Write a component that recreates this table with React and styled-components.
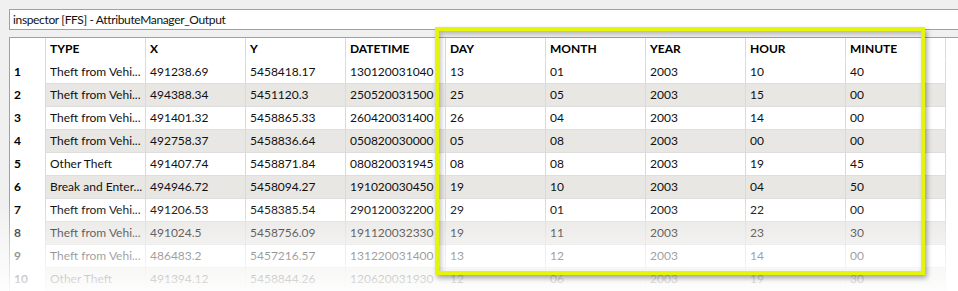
import React from 'react'
import styled, { createGlobalStyle } from 'styled-components'

const GlobalStyle = createGlobalStyle`
  html, body {
    margin: 0;
    padding: 0;
    background: #f0f0f0;
    overflow: hidden;
  }
  body {
    font-family: "Segoe UI", Lato, "Noto Sans", sans-serif;
    font-size: 12px;
    color: #111;
  }
`

const COLUMNS = ['TYPE', 'X', 'Y', 'DATETIME', 'DAY', 'MONTH', 'YEAR', 'HOUR', 'MINUTE']

const ROWS = [
  ['Theft from Vehi...', '491238.69', '5458418.17', '130120031040', '13', '01', '2003', '10', '40'],
  ['Theft from Vehi...', '494388.34', '5451120.3', '250520031500', '25', '05', '2003', '15', '00'],
  ['Theft from Vehi...', '491401.32', '5458865.33', '260420031400', '26', '04', '2003', '14', '00'],
  ['Theft from Vehi...', '492758.37', '5458836.64', '050820030000', '05', '08', '2003', '00', '00'],
  ['Other Theft', '491407.74', '5458871.84', '080820031945', '08', '08', '2003', '19', '45'],
  ['Break and Enter...', '494946.72', '5458094.27', '191020030450', '19', '10', '2003', '04', '50'],
  ['Theft from Vehi...', '491206.53', '5458385.54', '290120032200', '29', '01', '2003', '22', '00'],
  ['Theft from Vehi...', '491024.5', '5458756.09', '191120032330', '19', '11', '2003', '23', '30'],
  ['Theft from Vehi...', '486483.2', '5457216.57', '131220031400', '13', '12', '2003', '14', '00'],
  ['Other Theft', '491394.12', '5458844.26', '120620031930', '12', '06', '2003', '19', '30'],
]

const Page = styled.div`
  position: relative;
  height: 291px;
  padding: 9px 0 0 9px;
  display: flex;
  flex-direction: column;
  gap: 7px;
  box-sizing: border-box;
  overflow: hidden;
`

const TitleBar = styled.div`
  height: 19px;
  line-height: 19px;
  background: #fff;
  border: 1px solid #a0a0a0;
  border-right: none;
  padding-left: 3px;
  white-space: nowrap;
  letter-spacing: -0.35px;
`

const TableArea = styled.div`
  position: relative;
  flex: 1;
  background: #fff;
  border-top: 1px solid #a0a0a0;
  border-left: 1px solid #a0a0a0;
`

const Row = styled.div`
  display: grid;
  grid-template-columns: 36px repeat(9, 100px) 1fr;
  height: 23px;
`

const RowHead = styled.div`
  background: #fff;
  border-right: 1px solid #d9d9d9;
  padding-left: 4px;
  font-weight: 700;
  color: #000;
  line-height: 22px;
`

const Cell = styled.div`
  background: ${p => (p.$stripe ? '#e8e7e4' : '#fff')};
  border-right: 1px solid #dadada;
  border-bottom: 1px solid ${p => (p.$header ? '#fff' : '#dedede')};
  padding-left: 4px;
  line-height: 22px;
  white-space: nowrap;
  overflow: hidden;
  font-weight: ${p => (p.$header ? 700 : 400)};
  color: ${p => (p.$header ? '#000' : '#111')};
`

const Filler = styled.div`
  background: #fff;
`

const Highlight = styled.div`
  position: absolute;
  left: 435px;
  top: 27px;
  width: 490px;
  height: 248px;
  box-sizing: border-box;
  border: 4px solid #e4f40a;
  box-shadow: 2px 3px 5px rgba(0, 0, 0, 0.35), inset 2px 3px 5px rgba(0, 0, 0, 0.25);
  z-index: 3;
  pointer-events: none;
`

const Fade = styled.div`
  position: absolute;
  left: 0;
  right: 0;
  top: 205px;
  bottom: 0;
  background: linear-gradient(to bottom, rgba(255, 255, 255, 0) 0%, rgba(255, 255, 255, 0.55) 55%, rgba(255, 255, 255, 0.92) 100%);
  z-index: 2;
  pointer-events: none;
`

export default function App() {
  return (
    <>
      <GlobalStyle />
      <Page>
        <TitleBar>inspector [FFS] - AttributeManager_Output</TitleBar>
        <TableArea>
          <Row>
            <RowHead />
            {COLUMNS.map(c => (
              <Cell key={c} $header>{c}</Cell>
            ))}
            <Filler />
          </Row>
          {ROWS.map((r, i) => (
            <Row key={i}>
              <RowHead>{i + 1}</RowHead>
              {r.map((v, j) => (
                <Cell key={j} $stripe={i % 2 === 1}>{v}</Cell>
              ))}
              <Filler />
            </Row>
          ))}
        </TableArea>
        <Fade />
        <Highlight />
      </Page>
    </>
  )
}
